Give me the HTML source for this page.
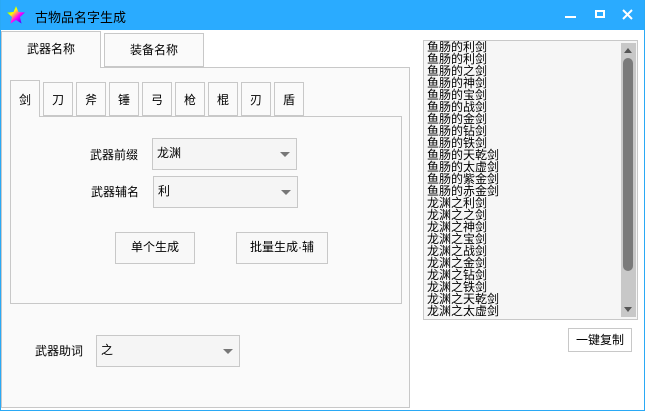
<!DOCTYPE html>
<html><head><meta charset="utf-8"><style>
*{margin:0;padding:0;box-sizing:border-box}
body{width:645px;height:411px;overflow:hidden;background:#fff;font-family:"Liberation Sans","Noto Sans CJK SC",sans-serif;font-size:12px;color:#000;position:relative}
.a{position:absolute}
.win{left:0;top:0;width:645px;height:411px;border:1px solid #2aa9f5;border-top:none}
.title{left:0;top:0;width:645px;height:30px;background:#2aabff}
.bd{border:1px solid #c8c8c8}
.tab{background:#fafafa;border:1px solid #c8c8c8;border-bottom:none;text-align:center}
.combo{background:#f5f5f5;border:1px solid #c8c8c8;padding-left:4px;line-height:29px}
.combo:after{content:"";position:absolute;right:6px;top:13px;border:5px solid transparent;border-top:5px solid #777;border-bottom:none;width:0;height:0}
.btn{background:#f8f8f8;border:1px solid #c8c8c8;text-align:center;line-height:29px}
.list{left:423px;top:40px;width:215px;height:280px;background:#f6f6f6;border:1px solid #c8c8c8;overflow:hidden}
.list div{line-height:12px;font-size:12px;padding-left:3px;white-space:nowrap}
</style></head><body>
<div class="a title"></div>
<svg class="a" style="left:7px;top:6px" width="18" height="18" viewBox="0 0 18 18"><defs><linearGradient id="g" x1="0" y1="0" x2="1" y2="1"><stop offset="0" stop-color="#0f0"/><stop offset=".35" stop-color="#ff0"/><stop offset=".6" stop-color="#f0f"/><stop offset="1" stop-color="#00f"/></linearGradient></defs><polygon points="9,0 11.5,6 18,6.5 13,11 14.5,17.5 9,14 3.5,17.5 5,11 0,6.5 6.5,6" fill="url(#g)"/></svg>
<div class="a" style="left:35px;top:7px;font-size:13px">古物品名字生成</div>
<div class="a" style="left:565px;top:16px;width:11px;height:2px;background:#fff"></div>
<div class="a" style="left:595px;top:10px;width:10px;height:8px;border:2px solid #fff"></div>
<svg class="a" style="left:622px;top:9px" width="11" height="11"><path d="M1 1L10 10M10 1L1 10" stroke="#fff" stroke-width="2"/></svg>
<div class="a win"></div>

<div class="a bd" style="left:1px;top:67px;width:409px;height:341px;background:#fafafa"></div>
<div class="a tab" style="left:1px;top:31px;width:100px;height:37px;line-height:34px">武器名称</div>
<div class="a tab" style="left:104px;top:33px;width:100px;height:34px;line-height:32px;border-bottom:1px solid #c8c8c8">装备名称</div>

<div class="a bd" style="left:10px;top:116px;width:392px;height:188px;background:#fafafa"></div>
<div class="a tab" style="left:10px;top:80px;width:30px;height:37px;line-height:38px">剑</div>
<div class="a tab" style="left:43px;top:82px;width:30px;height:34px;line-height:34px;border-bottom:1px solid #c8c8c8">刀</div>
<div class="a tab" style="left:76px;top:82px;width:30px;height:34px;line-height:34px;border-bottom:1px solid #c8c8c8">斧</div>
<div class="a tab" style="left:109px;top:82px;width:30px;height:34px;line-height:34px;border-bottom:1px solid #c8c8c8">锤</div>
<div class="a tab" style="left:142px;top:82px;width:30px;height:34px;line-height:34px;border-bottom:1px solid #c8c8c8">弓</div>
<div class="a tab" style="left:175px;top:82px;width:30px;height:34px;line-height:34px;border-bottom:1px solid #c8c8c8">枪</div>
<div class="a tab" style="left:208px;top:82px;width:30px;height:34px;line-height:34px;border-bottom:1px solid #c8c8c8">棍</div>
<div class="a tab" style="left:241px;top:82px;width:30px;height:34px;line-height:34px;border-bottom:1px solid #c8c8c8">刃</div>
<div class="a tab" style="left:274px;top:82px;width:30px;height:34px;line-height:34px;border-bottom:1px solid #c8c8c8">盾</div>

<div class="a" style="left:90px;top:146px">武器前缀</div>
<div class="a combo" style="left:152px;top:138px;width:145px;height:32px">龙渊</div>
<div class="a" style="left:91px;top:183px">武器辅名</div>
<div class="a combo" style="left:153px;top:176px;width:145px;height:32px">利</div>
<div class="a btn" style="left:115px;top:232px;width:80px;height:32px">单个生成</div>
<div class="a btn" style="left:236px;top:232px;width:92px;height:32px">批量生成·辅</div>

<div class="a" style="left:35px;top:342px">武器助词</div>
<div class="a combo" style="left:96px;top:335px;width:144px;height:32px">之</div>

<div class="a list">
<div>鱼肠的利剑</div><div>鱼肠的利剑</div><div>鱼肠的之剑</div><div>鱼肠的神剑</div><div>鱼肠的宝剑</div><div>鱼肠的战剑</div><div>鱼肠的金剑</div><div>鱼肠的钻剑</div><div>鱼肠的铁剑</div><div>鱼肠的天乾剑</div><div>鱼肠的太虚剑</div><div>鱼肠的紫金剑</div><div>鱼肠的赤金剑</div><div>龙渊之利剑</div><div>龙渊之之剑</div><div>龙渊之神剑</div><div>龙渊之宝剑</div><div>龙渊之战剑</div><div>龙渊之金剑</div><div>龙渊之钻剑</div><div>龙渊之铁剑</div><div>龙渊之天乾剑</div><div>龙渊之太虚剑</div>
</div>
<div class="a" style="left:621px;top:43px;width:15px;height:274px;background:#c8c8c8"></div>
<div class="a" style="left:623px;top:58px;width:10px;height:213px;background:#7a7a7a;border-radius:5px"></div>
<div class="a" style="left:624px;top:48px;border:4px solid transparent;border-bottom:5px solid #555;border-top:none;width:0;height:0"></div>
<div class="a" style="left:624px;top:307px;border:4px solid transparent;border-top:5px solid #555;border-bottom:none;width:0;height:0"></div>
<div class="a btn" style="left:568px;top:328px;width:64px;height:24px;line-height:22px;background:#fff">一键复制</div>
</body></html>
